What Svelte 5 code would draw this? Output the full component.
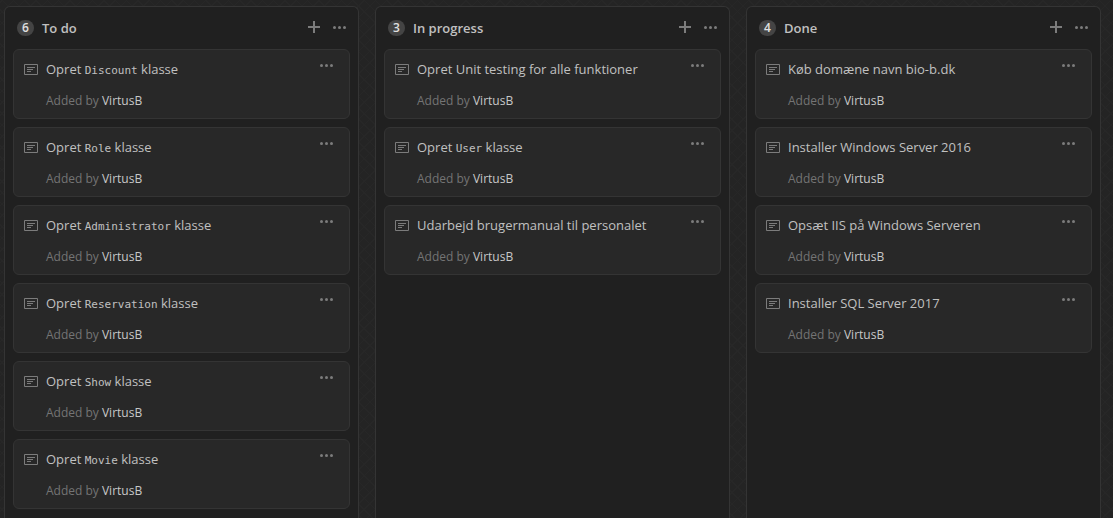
<script>
  const code = (name) => ['Opret ', name, ' klasse'];
  const columns = [
    {
      title: 'To do',
      cards: [code('Discount'), code('Role'), code('Administrator'), code('Reservation'), code('Show'), code('Movie')],
    },
    {
      title: 'In progress',
      cards: [['Opret Unit testing for alle funktioner'], code('User'), ['Udarbejd brugermanual til personalet']],
    },
    {
      title: 'Done',
      cards: [
        ['Køb domæne navn bio-b.dk'],
        ['Installer Windows Server 2016'],
        ['Opsæt IIS på Windows Serveren'],
        ['Installer SQL Server 2017'],
      ],
    },
  ];
</script>

{#snippet dots()}
  <svg width="13" height="3" viewBox="0 0 13 3" aria-hidden="true">
    <circle cx="1.5" cy="1.5" r="1.5" />
    <circle cx="6.5" cy="1.5" r="1.5" />
    <circle cx="11.5" cy="1.5" r="1.5" />
  </svg>
{/snippet}

<main class="board">
  {#each columns as column}
    <section class="column">
      <header>
        <span class="count">{column.cards.length}</span>
        <h2>{column.title}</h2>
        <button class="add" aria-label="Add a note">
          <svg width="12" height="12" viewBox="0 0 12 12" aria-hidden="true"><path d="M5 0h2v5h5v2H7v5H5V7H0V5h5z" /></svg>
        </button>
        <button class="more" aria-label="Column menu">{@render dots()}</button>
      </header>
      <div class="cards">
        {#each column.cards as [text, name, rest]}
          <article class="card">
            <svg class="note" width="14" height="11" viewBox="0 0 14 11" aria-hidden="true">
              <path fill-rule="evenodd" d="M1 0h12a1 1 0 0 1 1 1v9a1 1 0 0 1-1 1H1a1 1 0 0 1-1-1V1a1 1 0 0 1 1-1zM1 1v9h12V1zM3 3h8v1H3zM3 5h6v1H3zM3 7h4v1H3z" />
            </svg>
            <div class="body">
              <p class="title">{text}{#if name}<code>{name}</code>{rest}{/if}</p>
              <p class="author">Added by <a href="#virtusb">VirtusB</a></p>
            </div>
            <button class="menu" aria-label="Card menu">{@render dots()}</button>
          </article>
        {/each}
      </div>
    </section>
  {/each}
</main>

<style>
  :global(body) {
    margin: 0;
    background-color: #242424;
    background-image:
      repeating-linear-gradient(45deg, transparent 0 7px, #272727 7px 8px),
      repeating-linear-gradient(-45deg, transparent 0 7px, #272727 7px 8px);
  }
  .board {
    box-sizing: border-box;
    min-height: 100vh;
    display: grid;
    grid-template-columns: repeat(3, minmax(0, 1fr));
    gap: 16px;
    padding: 6px 12px 0 4px;
    font-family: 'Segoe UI', 'Open Sans', 'Noto Sans', sans-serif;
    font-size: 13px;
    color: #c0c0c0;
  }
  .column {
    background: #202020;
    border: 1px solid #343434;
    border-bottom: 0;
    border-radius: 6px 6px 0 0;
    padding: 0 8px 8px;
  }
  header {
    display: flex;
    align-items: center;
    height: 42px;
    padding: 0 4px;
  }
  .count {
    width: 17px;
    height: 16px;
    border-radius: 8px;
    background: #444;
    color: #e0e0e0;
    font-size: 12px;
    font-weight: 600;
    line-height: 16px;
    text-align: center;
  }
  h2 {
    flex: 1;
    margin: 0 0 0 8px;
    font-size: 13px;
    font-weight: 600;
    line-height: 20px;
  }
  button {
    display: flex;
    padding: 0;
    border: 0;
    background: none;
    cursor: pointer;
  }
  svg {
    flex: none;
    fill: #7c7c7c;
  }
  .add {
    margin-right: 13px;
  }
  .add,
  .more {
    padding-bottom: 2px;
  }
  .cards {
    display: grid;
    gap: 8px;
  }
  .card {
    box-sizing: border-box;
    display: flex;
    align-items: flex-start;
    min-height: 70px;
    padding: 9px 16px 7px 10px;
    background: #282828;
    border: 1px solid #343434;
    border-radius: 6px;
  }
  .note {
    margin: 5px 8px 0 0;
  }
  .body {
    flex: 1;
    min-width: 0;
  }
  p {
    margin: 0;
  }
  .title {
    line-height: 20px;
  }
  code {
    font-family: Consolas, 'DejaVu Sans Mono', monospace;
    font-size: 11px;
    line-height: 16px;
  }
  .author {
    margin-top: 12px;
    font-size: 12px;
    line-height: 20px;
    color: #747474;
  }
  a {
    color: #c8c8c8;
    text-decoration: none;
  }
  .menu {
    margin-top: 5px;
  }
</style>
